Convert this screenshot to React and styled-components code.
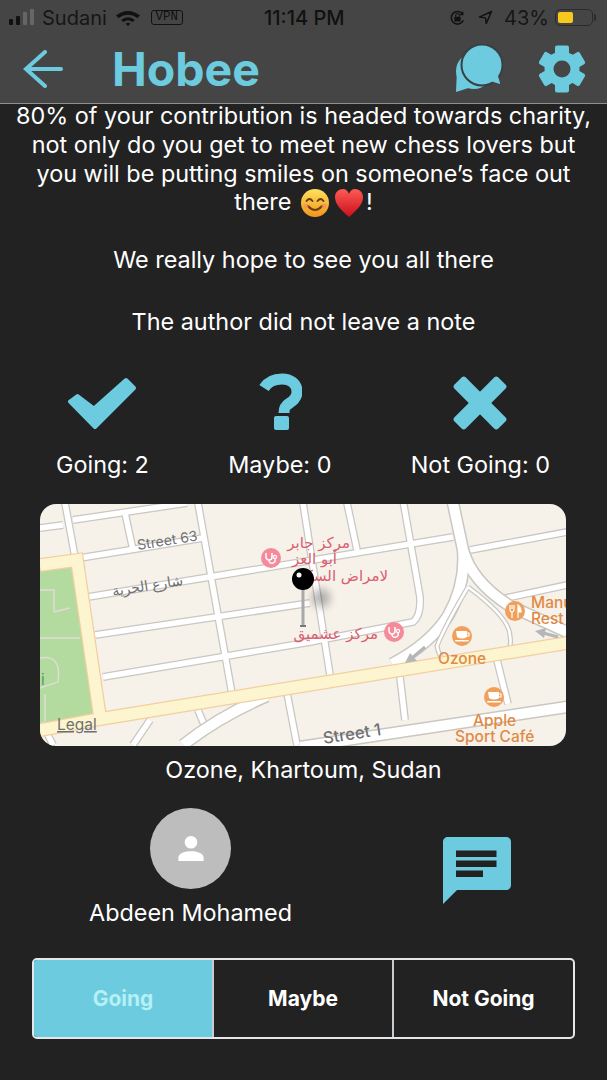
import styled, { createGlobalStyle } from 'styled-components'

const GlobalStyle = createGlobalStyle`
  html, body {
    margin: 0;
    padding: 0;
    background: #222223;
  }
  * {
    box-sizing: border-box;
  }
`

const ACCENT = '#6ccbde'
const HEADER_BG = '#454545'

const ROADS = [
  'M0 24 L23 21',
  'M33 16 L147 -1',
  'M40 54 L163 34',
  'M48 93 L413 33',
  'M430 46 L527 28',
  'M55 131 L270 99',
  'M63 173 L270 138 L373 118 Q381 112 380 93 L363 -4',
  'M25 -1 L35 53',
  'M85 9 L93 46',
  'M158 -1 L192 190',
  'M263 -1 L290 171',
  'M307 -1 L317 46',
  'M360 173 L365 216',
  'M457 156 L468 200',
  'M247 189 L257 241',
  'M158 206 L165 223',
  'M93 241 L110 216',
  'M7 229 L13 241',
  'M457 96 L527 81',
]

const WIDE_ROADS = [
  'M413 -1 L423 46 Q426 80 408 112 Q390 140 352 160',
  'M423 46 Q432 78 470 102 L527 128',
  'M260 243 L527 203',
  'M143 241 Q180 212 227 192',
]

const MINOR_ROAD = 'M428 83 Q405 122 397 142 Q400 158 410 158 M428 83 Q470 114 470 132 Q472 142 467 152'

function CoffeePoi({ x, y }) {
  return (
    <g transform={`translate(${x} ${y})`}>
      <circle r="10" fill="#f0a05a" />
      <path d="M-6 -5 H5 V1 Q0 4 -5 1 Z" fill="#fff" />
      <path d="M5 -3 H7 V0 H4" fill="none" stroke="#fff" strokeWidth="1.2" />
      <rect x="-7" y="4" width="14" height="1.6" rx="0.8" fill="#fff" />
    </g>
  )
}

function ClinicPoi({ x, y }) {
  return (
    <g transform={`translate(${x} ${y})`}>
      <circle r="10" fill="#f58a9a" />
      <path d="M-5 -5 V-1 A3 3 0 0 0 1 -1 V-5 M-2 2 Q-2 6 2 5 Q5 4 4 1" fill="none" stroke="#fff" strokeWidth="1.5" />
      <circle cx="4" cy="-1" r="1.6" fill="none" stroke="#fff" strokeWidth="1.2" />
    </g>
  )
}

function MapView() {
  return (
    <MapBox>
      <svg width="526" height="242" viewBox="0 0 526 242">
        <defs>
          <filter id="pinShadow" x="-150%" y="-150%" width="400%" height="400%">
            <feGaussianBlur stdDeviation="5" />
          </filter>
        </defs>
        <rect width="526" height="242" fill="#f6f1e9" />
        <polygon points="0,64 32,63 55,211 0,219" fill="#b3dba0" />
        <path d="M0 86 H14 V108 M0 134 H40 M14 108 L30 104 M0 154 Q22 150 18 178 L0 184 M5 220 V190" fill="none" stroke="#dfdcd2" strokeWidth="1.5" />
        <g fill="none" stroke="#c9c7c2" strokeWidth="8">
          {ROADS.map(d => <path key={d} d={d} />)}
        </g>
        <g fill="none" stroke="#ffffff" strokeWidth="5.5">
          {ROADS.map(d => <path key={d} d={d} />)}
        </g>
        <g fill="none" stroke="#c9c7c2" strokeWidth="13">
          {WIDE_ROADS.map(d => <path key={d} d={d} />)}
        </g>
        <g fill="none" stroke="#ffffff" strokeWidth="10">
          {WIDE_ROADS.map(d => <path key={d} d={d} />)}
        </g>
        <path d={MINOR_ROAD} fill="none" stroke="#c9c7c2" strokeWidth="5" />
        <path d={MINOR_ROAD} fill="none" stroke="#fff" strokeWidth="2.5" />
        <g fill="none" stroke="#f2cfa0" strokeWidth="14">
          <path d="M0 61 L37 56 L60 213" />
          <path d="M0 226 L60 215 L527 139" />
        </g>
        <g fill="none" stroke="#fcf5cf" strokeWidth="11.5">
          <path d="M0 61 L37 56 L60 213" />
          <path d="M0 226 L60 215 L527 139" />
        </g>
        <path d="M385 143 L372 154 M518 133 L503 129" stroke="#b4b6b8" strokeWidth="3" fill="none" />
        <polygon points="365,159 370,149 377,157" fill="#b4b6b8" />
        <polygon points="495,127 506,124 504,134" fill="#b4b6b8" />

        <MapLabel x="98" y="46" transform="rotate(-9 98 46)">Street 63</MapLabel>
        <MapLabel x="73" y="92" transform="rotate(-9 73 92)">شارع الحرية</MapLabel>
        <MapLabel x="284" y="240" transform="rotate(-9 284 240)" $size={16.5} $bold>Street 1</MapLabel>
        <MapLabel x="17" y="226" $size={15.5} $under>Legal</MapLabel>
        <ParkLabel x="1" y="181">i</ParkLabel>

        <ClinicPoi x={231} y={54} />
        <ClinicPoi x={354} y={128} />
        <PinkLabel x="310" y="44">مركز جابر</PinkLabel>
        <PinkLabel x="297" y="60">أبو العز</PinkLabel>
        <PinkLabel x="348" y="77">لامراض السكر</PinkLabel>
        <PinkLabel x="338" y="135">مركز عشميق</PinkLabel>

        <CoffeePoi x={422} y={132} />
        <CoffeePoi x={454} y={193} />
        <g transform="translate(475 107)">
          <circle r="10" fill="#f0a05a" />
          <path d="M-5 -6 V-2 Q-5 1 -3 1 V7 M-3 -6 V-2 M-1 -6 V-2 Q-1 1 -3 1" fill="none" stroke="#fff" strokeWidth="1.2" />
          <path d="M3 7 V-6 Q6 -4 6 1 H3" fill="#fff" stroke="#fff" strokeWidth="1.2" />
        </g>
        <OrangeLabel x="398" y="160">Ozone</OrangeLabel>
        <OrangeLabel x="433" y="222">Apple</OrangeLabel>
        <OrangeLabel x="415" y="238">Sport Café</OrangeLabel>
        <OrangeLabel x="491" y="104">Manu</OrangeLabel>
        <OrangeLabel x="491" y="120">Rest</OrangeLabel>

        <ellipse cx="281" cy="94" rx="9" ry="9" fill="#000" opacity="0.3" filter="url(#pinShadow)" />
        <rect x="261.5" y="85" width="3" height="38" fill="#a9a9a9" />
        <rect x="260" y="121" width="6" height="2" fill="#777" />
        <circle cx="263" cy="75" r="11" fill="#000" />
        <circle cx="259" cy="71" r="2.5" fill="#fff" />
      </svg>
    </MapBox>
  )
}

function Stat({ icon, label }) {
  return (
    <StatColumn>
      <StatIcon>{icon}</StatIcon>
      <StatLabel>{label}</StatLabel>
    </StatColumn>
  )
}

export default function App() {
  return (
    <Screen>
      <GlobalStyle />
      <TopArea>
        <StatusBar>
          <StatusGroup>
            <svg width="26" height="17" viewBox="0 0 26 17">
              <rect x="1" y="10" width="4" height="6" rx="1" fill="#111" />
              <rect x="8" y="7" width="4" height="9" rx="1" fill="#111" />
              <rect x="15" y="3" width="4" height="13" rx="1" fill="#666" />
              <rect x="22" y="0" width="4" height="16" rx="1" fill="#666" />
            </svg>
            <StatusText>Sudani</StatusText>
            <WifiIcon width="24" height="16" viewBox="0 0 24 16">
              <path d="M0 5.5 Q12 -3.5 24 5.5 L21.5 8 Q12 1.5 2.5 8 Z M5 10 Q12 4.5 19 10 L16.5 12 Q12 8.5 7.5 12 Z M9.5 13.5 Q12 12 14.5 13.5 L12 16 Z" fill="#111" />
            </WifiIcon>
            <VpnBadge>VPN</VpnBadge>
          </StatusGroup>
          <StatusTime>11:14 PM</StatusTime>
          <StatusGroup $end>
            <svg width="19" height="18" viewBox="0 0 20 20">
              <path d="M16.5 12.5 A7 7 0 1 1 16 6" fill="none" stroke="#111" strokeWidth="1.8" />
              <path d="M16.5 2.5 V7 H12 Z" fill="#111" />
              <rect x="6.5" y="8.5" width="7" height="5.5" rx="1" fill="#111" />
              <path d="M8 8.5 V7 a2 2 0 0 1 4 0 V8.5" fill="none" stroke="#111" strokeWidth="1.2" />
            </svg>
            <svg width="15" height="15" viewBox="0 0 20 20">
              <path d="M18 2 L2 9.5 L10 10.5 L11 18 Z" fill="none" stroke="#111" strokeWidth="2" strokeLinejoin="round" />
            </svg>
            <StatusText>43%</StatusText>
            <Battery>
              <BatteryFill />
            </Battery>
          </StatusGroup>
        </StatusBar>
        <Header>
          <HeaderLeft>
            <svg width="42" height="38" viewBox="0 0 42 38">
              <path d="M38 19 H3 M22 2 L3 19 L22 36" fill="none" stroke={ACCENT} strokeWidth="4" strokeLinecap="round" />
            </svg>
            <Title>Hobee</Title>
          </HeaderLeft>
          <HeaderRight>
            <svg width="50" height="50" viewBox="0 0 50 50">
              <circle cx="19" cy="27" r="18" fill={ACCENT} />
              <path d="M2 25 L1 48 L20 42 Z" fill={ACCENT} />
              <path d="M32 30 L45 40 L41 24 Z" fill={ACCENT} />
              <circle cx="27" cy="21" r="20.5" fill={ACCENT} stroke="#3a3f42" strokeWidth="2" />
              <path d="M32 36 L45 40 L42 28 Z" fill={ACCENT} />
            </svg>
            <svg width="48" height="48" viewBox="-24 -24 48 48">
              <g fill={ACCENT}>
                <circle r="17.5" />
                {[0, 60, 120, 180, 240, 300].map(a => (
                  <rect key={a} x="-7" y="-23.5" width="14" height="12" rx="2" transform={`rotate(${a})`} />
                ))}
              </g>
              <circle r="8.5" fill={HEADER_BG} />
            </svg>
          </HeaderRight>
        </Header>
      </TopArea>

      <Body>
        <Description>
          80% of your contribution is headed towards charity, not only do you get to meet new chess lovers but you will be putting smiles on someone’s face out there{' '}
          <Emoji width="28" height="30" viewBox="0 0 28 30">
            <defs>
              <linearGradient id="smileFill" x1="0" y1="0" x2="0" y2="1">
                <stop offset="0" stopColor="#fde25a" />
                <stop offset="1" stopColor="#f0941c" />
              </linearGradient>
            </defs>
            <circle cx="14" cy="15" r="14" fill="url(#smileFill)" />
            <path d="M5.5 13 Q8.5 9 11.5 13 M16.5 13 Q19.5 9 22.5 13" fill="none" stroke="#6b3f10" strokeWidth="2" strokeLinecap="round" />
            <path d="M7 18 Q14 26 21 18" fill="none" stroke="#6b3f10" strokeWidth="2" strokeLinecap="round" />
            <circle cx="5" cy="18" r="2.6" fill="#f58a5a" opacity="0.6" />
            <circle cx="23" cy="18" r="2.6" fill="#f58a5a" opacity="0.6" />
          </Emoji>
          <Emoji width="28" height="30" viewBox="0 0 28 30">
            <defs>
              <linearGradient id="heartFill" x1="0" y1="0" x2="0" y2="1">
                <stop offset="0" stopColor="#ff5a55" />
                <stop offset="1" stopColor="#c8101a" />
              </linearGradient>
            </defs>
            <path d="M14 29 C5 21 0 16 0 9 C0 4 4 1 8 1 C11 1 13 3 14 6 C15 3 17 1 20 1 C24 1 28 4 28 9 C28 16 23 21 14 29 Z" fill="url(#heartFill)" />
          </Emoji>
          !
        </Description>
        <Note $gap={28}>We really hope to see you all there</Note>
        <Note $gap={33}>The author did not leave a note</Note>

        <Stats>
          <Stat
            label="Going: 2"
            icon={
              <svg width="72" height="56" viewBox="0 0 72 56">
                <polygon points="11.5,21 28,33.5 60,5 68,13 29,52 4,26.5" fill={ACCENT} stroke={ACCENT} strokeWidth="4" strokeLinejoin="round" />
              </svg>
            }
          />
          <Stat
            label="Maybe: 0"
            icon={
              <svg width="44" height="60" viewBox="0 0 44 60">
                <path d="M6 15 C11 7 18 6 24 6 C32 6 39 10 39 19 C39 25 35 28 31 30.5 C27 33 26 35 26 40" fill="none" stroke={ACCENT} strokeWidth="11" />
                <rect x="16" y="43" width="15" height="14" rx="2" fill={ACCENT} />
              </svg>
            }
          />
          <Stat
            label="Not Going: 0"
            icon={
              <svg width="56" height="56" viewBox="-28 -28 56 56">
                <rect x="-31" y="-8" width="62" height="16" rx="3" fill={ACCENT} transform="rotate(45)" />
                <rect x="-31" y="-8" width="62" height="16" rx="3" fill={ACCENT} transform="rotate(-45)" />
              </svg>
            }
          />
        </Stats>

        <MapView />
        <Location>Ozone, Khartoum, Sudan</Location>

        <AuthorRow>
          <Author>
            <Avatar>
              <svg width="28" height="27" viewBox="0 0 30 30">
                <circle cx="15" cy="8" r="7" fill="#fff" />
                <path d="M1 29 V25 C1 20 9 18 15 18 C21 18 29 20 29 25 V29 Z" fill="#fff" />
              </svg>
            </Avatar>
            <AuthorName>Abdeen Mohamed</AuthorName>
          </Author>
          <MessageIcon width="68" height="67" viewBox="0 0 68 67">
            <path d="M5 0 H63 C66 0 68 2 68 5 V48 C68 51 66 53 63 53 H14 L0 67 V5 C0 2 2 0 5 0 Z" fill={ACCENT} />
            <path d="M13 13.5 H53.5 V20 H13 Z M13 23.5 H53.5 V30 H13 Z M13 33.5 H40 V40 H13 Z" fill="#222223" />
          </MessageIcon>
        </AuthorRow>

        <Segments>
          <Segment $active>Going</Segment>
          <Segment>Maybe</Segment>
          <Segment>Not Going</Segment>
        </Segments>
      </Body>
    </Screen>
  )
}

const Screen = styled.div`
  width: 607px;
  height: 1080px;
  overflow: hidden;
  background: #222223;
  color: #fff;
  font-family: Inter, "Noto Sans", sans-serif;
`

const TopArea = styled.div`
  position: relative;
  z-index: 1;
  height: 104px;
  background: ${HEADER_BG};
  border-bottom: 1px solid #8f8f8f;
`

const StatusBar = styled.div`
  height: 35px;
  padding: 0 14px 0 8px;
  display: grid;
  grid-template-columns: 256px auto 1fr;
  align-items: center;
`

const StatusGroup = styled.div`
  display: flex;
  align-items: center;
  gap: ${p => (p.$end ? '11px' : '8px')};
  justify-content: ${p => (p.$end ? 'flex-end' : 'flex-start')};
`

const WifiIcon = styled.svg`
  margin-left: 1px;
`

const StatusText = styled.span`
  font-size: 20px;
  color: #161616;
`

const StatusTime = styled.span`
  font-size: 20px;
  font-weight: 500;
  color: #111;
`

const VpnBadge = styled.span`
  margin-left: 3px;
  width: 32px;
  height: 15px;
  font-family: "Liberation Mono", monospace;
  font-size: 12.5px;
  line-height: 13px;
  text-align: center;
  border: 1.5px solid #111;
  border-radius: 3px;
  color: #111;
`

const Battery = styled.div`
  position: relative;
  width: 38px;
  height: 17px;
  margin-left: -5px;
  padding: 2px;
  border: 1px solid #2b2b2b;
  border-radius: 5px;
  &::after {
    content: "";
    position: absolute;
    right: -4px;
    top: 4px;
    width: 2px;
    height: 7px;
    border-radius: 0 2px 2px 0;
    background: #2b2b2b;
  }
`

const BatteryFill = styled.div`
  width: 15px;
  height: 100%;
  border-radius: 2px;
  background: #f8c91c;
`

const Header = styled.div`
  height: 68px;
  padding: 0 21px 0 23px;
  display: flex;
  align-items: center;
  justify-content: space-between;
`

const HeaderLeft = styled.div`
  display: flex;
  align-items: center;
  gap: 47px;
`

const HeaderRight = styled.div`
  display: flex;
  align-items: center;
  gap: 33px;
`

const Title = styled.h1`
  margin: 0;
  font-size: 46.5px;
  font-weight: 700;
  color: ${ACCENT};
`

const Body = styled.main`
  display: flex;
  flex-direction: column;
  align-items: center;
`

const Description = styled.p`
  margin: -2px 0 0;
  padding: 0 12px;
  font-size: 23.4px;
  line-height: 28.8px;
  text-align: center;
`

const Emoji = styled.svg`
  margin: -6px 3px;
  vertical-align: -2px;
`

const Note = styled.p`
  margin: ${p => p.$gap}px 0 0;
  font-size: 23.4px;
  line-height: 29px;
  text-align: center;
`

const Stats = styled.div`
  width: 100%;
  margin-top: 37px;
  padding: 0 57px 0 56px;
  display: flex;
  justify-content: space-between;
`

const StatColumn = styled.div`
  display: flex;
  flex-direction: column;
  align-items: center;
  gap: 17px;
`

const StatIcon = styled.div`
  height: 60px;
  display: flex;
  align-items: center;
  justify-content: center;
`

const StatLabel = styled.span`
  font-size: 23.4px;
  line-height: 29px;
`

const MapBox = styled.div`
  align-self: flex-start;
  width: 526px;
  height: 242px;
  margin: 25px 0 0 40px;
  border-radius: 16px;
  overflow: hidden;
  svg {
    display: block;
  }
`

const MapLabel = styled.text`
  font-family: "Inter", "DejaVu Sans", sans-serif;
  font-size: ${p => p.$size || 14}px;
  font-weight: ${p => (p.$bold ? 500 : 400)};
  fill: #6f7072;
  text-decoration: ${p => (p.$under ? 'underline' : 'none')};
`

const ParkLabel = styled.text`
  font-family: Inter, sans-serif;
  font-size: 15px;
  fill: #4c9b56;
`

const PinkLabel = styled.text`
  font-family: "DejaVu Sans", sans-serif;
  font-size: 15px;
  text-anchor: end;
  fill: #d9606f;
`

const OrangeLabel = styled.text`
  font-family: Inter, sans-serif;
  font-size: 15.5px;
  font-weight: 500;
  fill: #e08a45;
`

const Location = styled.p`
  margin: 9px 0 0;
  font-size: 23.4px;
  line-height: 29px;
`

const AuthorRow = styled.div`
  width: 100%;
  margin-top: 24px;
  padding: 0 96px 0 89px;
  display: flex;
  align-items: flex-start;
  justify-content: space-between;
`

const Author = styled.div`
  display: flex;
  flex-direction: column;
  align-items: center;
  gap: 9px;
`

const Avatar = styled.div`
  width: 81px;
  height: 81px;
  border-radius: 50%;
  background: #bdbdbd;
  display: flex;
  align-items: center;
  justify-content: center;
`

const AuthorName = styled.span`
  font-size: 23.4px;
  line-height: 29px;
`

const MessageIcon = styled.svg`
  margin-top: 29px;
`

const Segments = styled.div`
  width: 543px;
  height: 81px;
  margin-top: 31px;
  display: grid;
  grid-template-columns: 178px 180px 1fr;
  border: 2px solid #e4e7ea;
  border-radius: 5px;
  overflow: hidden;
`

const Segment = styled.div`
  display: flex;
  align-items: center;
  justify-content: center;
  font-size: 21px;
  font-weight: 700;
  color: ${p => (p.$active ? '#b5f0f5' : '#fff')};
  background: ${p => (p.$active ? ACCENT : 'transparent')};
  & + & {
    border-left: 2px solid #c8ccd0;
  }
`
